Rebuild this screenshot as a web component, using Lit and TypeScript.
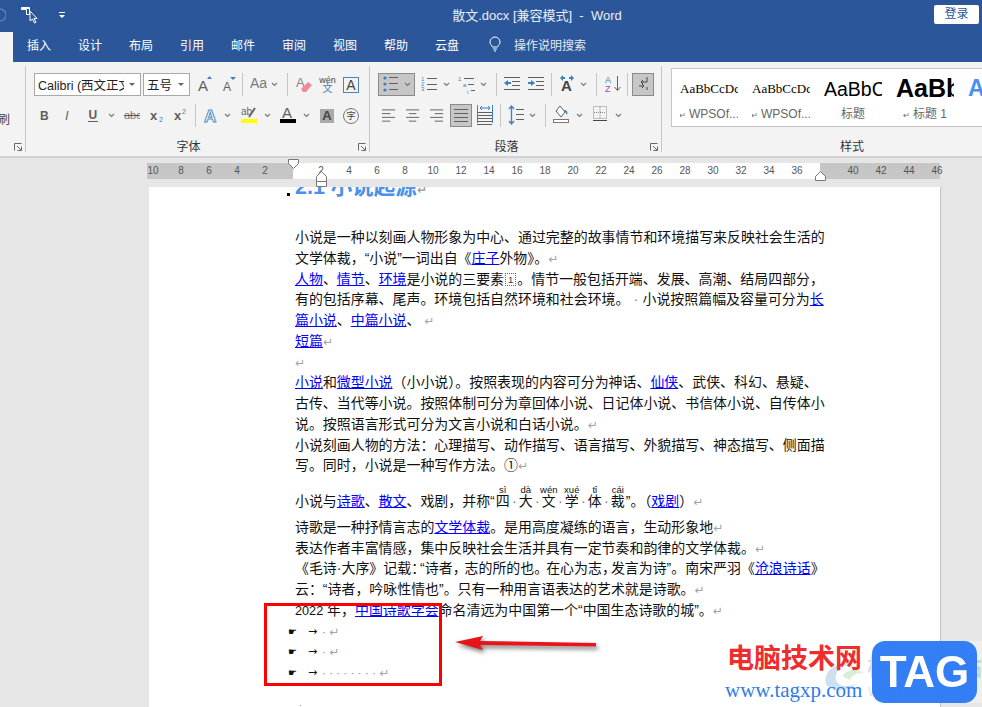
import { LitElement, html, svg, css } from "lit";
import { customElement } from "lit/decorators.js";

const G = "#5f5f5f";
const B = "#3f7fbf";
type Item = [number, number, unknown];

const ic = (w: number, body: unknown) =>
  html`<svg width=${w} height="23" viewBox="0 0 ${w} 23">${body}</svg>`;
const chev = ic(7, svg`<polyline points="1,10 3.5,12.5 6,10" fill="none" stroke="#777" stroke-width="1.1"/>`);
const sep = html`<span class="sep"></span>`;
const tx = (x: number, y: number, size: number, t: string, fill = G, extra = "") =>
  svg`<text x=${x} y=${y} font-size=${size} fill=${fill} font-weight=${extra === "b" ? 700 : 400} font-style=${extra === "i" ? "italic" : "normal"}>${t}</text>`;
const hl = (x1: number, x2: number, y: number, c = G) =>
  svg`<line x1=${x1} x2=${x2} y1=${y + 0.5} y2=${y + 0.5} stroke=${c}/>`;
const launcher = html`<svg class="launch" width="8" height="8" viewBox="0 0 8 8"><path d="M.5 7.5V.5H7.5M3 3l4 4M7.5 3.5V7.5H3.5" fill="none" stroke="#666"/></svg>`;

const lines = (xs: number, w: number, ys: number[]) => ys.map((y) => hl(xs, xs + w, y));

const font1: Item[] = [
  [34, 107, html`<div class="combo"><span class="ctext">Calibri (西文正文</span><span class="tri"></span></div>`],
  [143, 47, html`<div class="combo"><span class="ctext">五号</span><span class="tri"></span></div>`],
  [197, 16, ic(16, svg`${tx(1, 18, 15, "A")}<path d="M10 6l2.5-3 2.5 3z" fill=${B}/>`)],
  [222, 15, ic(15, svg`${tx(1, 18, 12, "A")}<path d="M8 4h6l-3 3z" fill=${B}/>`)],
  [242, 1, sep],
  [250, 17, ic(17, svg`${tx(0, 15, 14, "Aa", "#7a7a7a")}`)],
  [271, 7, chev],
  [287, 1, sep],
  [296, 16, ic(16, svg`${tx(0, 14, 13, "A", "#888")}<path d="M5 16l7-7 4 3-6 7H7z" fill="#ef8a98"/>`)],
  [319, 17, html`<span class="wen"><b>wén</b><i>文</i></span>`],
  [343, 16, html`<span class="abox">A</span>`],
];
const font2: Item[] = [
  [40, 9, ic(9, tx(0, 16, 12, "B", G, "b"))],
  [65, 8, ic(8, tx(0, 16, 13, "I", "#666", "i"))],
  [88, 10, ic(10, svg`${tx(0.5, 15, 12, "U", G, "b")}${hl(0, 10, 17)}`)],
  [108, 7, chev],
  [124, 16, ic(16, svg`${tx(0, 15, 11, "abc", "#777")}${hl(0, 16, 11, "#555")}`)],
  [150, 13, ic(13, svg`${tx(0, 16, 13, "x", G, "b")}${tx(9, 18, 7, "2", B)}`)],
  [174, 12, ic(12, svg`${tx(0, 16, 13, "x", G, "b")}${tx(8, 10, 7, "2", B)}`)],
  [195, 1, sep],
  [204, 15, ic(15, svg`<text x="0" y="18" font-size="17" font-weight="700" fill="#fff" stroke="#4f8ecb" stroke-width="1">A</text>`)],
  [224, 7, chev],
  [241, 16, ic(16, svg`${tx(0, 11, 10, "ab", "#666")}<path d="M8 13l6-9" stroke="#666" stroke-width="2"/><rect y="15" width="16" height="4" fill="#ffff00"/>`)],
  [264, 7, chev],
  [280, 16, ic(16, svg`${tx(2, 14, 15, "A")}<rect y="15" width="16" height="4" fill="#000"/>`)],
  [303, 7, chev],
  [320, 14, html`<span class="shaded">A</span>`],
  [343, 16, html`<span class="circ">字</span>`],
];
const listIcon = (kinds: string) => ic(18, svg`
  <g fill=${B}>${[6, 11, 16].map((y, i) => svg`<text x="0" y=${y + 2} font-size="6">${kinds[i]}</text>`)}</g>
  ${lines(6, 10, [5, 11, 16])}`);
const para1: Item[] = [
  [378, 37, html`<span class="active wide">${ic(16, svg`<g fill=${B}><circle cx="2" cy="5" r="1.6"/><circle cx="2" cy="11" r="1.6"/><circle cx="2" cy="17" r="1.6"/></g>${lines(6, 9, [4, 10, 16])}`)}${chev}</span>`],
  [420, 20, listIcon("123")],
  [443, 7, chev],
  [458, 18, ic(18, svg`<g fill=${B}><text x="0" y="8" font-size="6">1</text><text x="5" y="14" font-size="6">a</text><text x="9" y="21" font-size="6">i</text></g>${hl(6, 16, 5)}${hl(10, 16, 11)}${hl(13, 17, 17)}`)],
  [480, 7, chev],
  [496, 1, sep],
  [504, 16, ic(16, svg`${lines(8, 8, [8, 12])}${hl(0, 16, 4)}${hl(0, 16, 16)}<path d="M0 10l4-3v2h3v2H4v2z" fill=${B}/>`)],
  [528, 16, ic(16, svg`${lines(8, 8, [8, 12])}${hl(0, 16, 4)}${hl(0, 16, 16)}<path d="M7 10l-4-3v2H0v2h3v2z" fill=${B}/>`)],
  [551, 1, sep],
  [559, 16, ic(16, svg`${tx(2, 18, 15, "A", "#444", "b")}<path d="M1 5l3-3v2h2v2H4v2zM15 5l-3-3v2h-2v2h2v2z" fill=${B}/>`)],
  [580, 7, chev],
  [596, 1, sep],
  [605, 16, ic(16, svg`<text x="0" y="10" font-size="9" fill=${B}>A</text><text x="0" y="19" font-size="9" fill="#8e4fc0">Z</text><path d="M12.5 3v14M9.5 14l3 3.5 3-3.5" fill="none" stroke=${G}/>`)],
  [627, 1, sep],
  [632, 22, html`<span class="active">${ic(14, svg`<path d="M11 4v5H5M7 7L5 9l2 2" fill="none" stroke="#444"/><path d="M3 13h5M6 11l2 2-2 2" fill="none" stroke="#444"/><path d="M11 14v3" stroke="#444"/>`)}</span>`],
];
const al = (x: number[][]) => ic(16, svg`${x.map(([a, b], i) => hl(a, b, 5 + i * 4))}`);
const para2: Item[] = [
  [382, 15, al([[0, 14], [0, 9], [0, 14], [0, 9]])],
  [406, 15, al([[0, 14], [3, 11], [0, 14], [3, 11]])],
  [430, 15, al([[0, 14], [5, 14], [0, 14], [5, 14]])],
  [450, 22, html`<span class="active">${al([[1, 15], [1, 15], [1, 15], [1, 15]])}</span>`],
  [477, 16, ic(16, svg`${lines(0, 15, [8, 11, 14, 17, 20])}<path d="M.5 1v18M15.5 1v18" stroke=${B}/><path d="M3 4h10M3 4l2-2M3 4l2 2M13 4l-2-2M13 4l-2 2" stroke=${B} fill="none"/>`)],
  [500, 1, sep],
  [508, 16, ic(16, svg`${lines(8, 8, [5, 10, 15])}<path d="M3.5 2v18M1 5l2.5-3L6 5M1 17l2.5 3L6 17" fill="none" stroke=${B} stroke-width="1.3"/>`)],
  [529, 7, chev],
  [545, 1, sep],
  [553, 16, ic(16, svg`<path d="M3 7l4-5 5 6-4 5z" fill="#fff" stroke=${G}/><path d="M11 6c3 0 4 2 3 5-1-2-2-3-3-5z" fill=${B}/><rect x="0.5" y="15.5" width="15" height="3" fill="#fff" stroke="#777"/>`)],
  [576, 7, chev],
  [593, 14, ic(14, svg`<rect x="0.5" y="2.5" width="13" height="12" fill="none" stroke="#888" stroke-dasharray="1 1"/><path d="M7 3v12M1 8.5h12" stroke="#888" stroke-dasharray="1 1"/>${hl(0, 14, 16, "#444")}`)],
  [615, 7, chev],
];

const styleItems = [
  { s: "AaBbCcDd", c: "times", l: "WPSOf...", m: true },
  { s: "AaBbCcDd", c: "times", l: "WPSOf...", m: true },
  { s: "AaBbC", c: "h0", l: "标题", m: false },
  { s: "AaBb", c: "h1", l: "标题 1", m: true },
  { s: "A", c: "h2", l: "标", m: false },
];

const range = (from: number, to: number) => {
  const r: number[] = [];
  for (let i = from; i <= to; i += 2) r.push(i);
  return r;
};

const a = (t: string) => html`<a>${t}</a>`;
const pm = html`<span class="pm">↵</span>`;
const rb = (c: string, p: string) => html`<span class="rb"><span class="rt">${p}</span>${c}</span>`;
const dot = html`<span class="dot">·</span>`;

@customElement("app-root")
export class AppRoot extends LitElement {
  static styles = css`
    :host { display: block; position: relative; width: 982px; height: 707px; overflow: hidden; background: #e6e6e6;
      font-family: "Liberation Sans", "Noto Sans CJK SC", sans-serif; color: #000; }
    .title { height: 32px; background: #2b579a; display: grid; grid-template-columns: 1fr auto 1fr; align-items: center; color: #fff; }
    .qat { display: flex; align-items: center; padding: 0 0 2px 0; }
    .undo { margin-right: 15px; }
    .dd { margin-left: 20px; }
    .doc-name { font-size: 13px; color: #e9eef6; padding-bottom: 3px; padding-left: 92px; }
    .login { justify-self: end; margin: 0 3px 3px 0; width: 45px; height: 19px; border-radius: 2px; background: #fff; color: #2b579a; font-size: 12px; text-align: center; line-height: 19px; }
    .tabs { height: 30px; background: #2b579a; display: flex; align-items: center; color: #fff; font-size: 12px; padding-bottom: 6px; box-sizing: border-box; position: relative; }
    .home { width: 13px; height: 30px; background: #f3f3f3; margin-right: 14px; margin-bottom: -6px; flex: none; }
    .tab { width: 24px; margin-right: 27px; white-space: nowrap; }
    .bulb { margin: 0 14px 0 3px; }
    .search { color: #e4eaf3; margin-left: -1px; }
    .ribbon { background: #f3f3f3; border-bottom: 2px solid #d2d2d2; display: flex; padding-top: 4px; height: 90px; }
    .group { height: 86px; border-right: 1px solid #c6c6c6; box-sizing: border-box; display: flex; flex-direction: column; flex: none; position: relative; }
    .g0 { width: 26px; } .g1 { width: 344px; } .g2 { width: 292px; }
    .g3 { flex: 1; border: 0; min-width: 0; }
    .row { display: flex; height: 23px; align-items: center; font-size: 12px; flex: none; }
    .r1 { margin-top: 7px; } .r2 { margin-top: 8px; }
    .cell { flex: none; display: flex; align-items: center; justify-content: center; height: 23px; }
    .clip-text { font-size: 12px; color: #444; margin-top: 46px; margin-left: -2px; line-height: 16px; white-space: nowrap; }
    .foot { margin-top: auto; height: 20px; padding: 11px 18px 0 0; box-sizing: border-box; display: flex; justify-content: center; align-items: center; font-size: 12px; color: #333; line-height: 13px; }
    .g3 .foot { width: 380px; padding-right: 0; }
    .launch { position: absolute; right: 3px; bottom: 1px; }
    .sep { width: 1px; height: 23px; background: #c6c6c6; display: block; }
    .combo { width: 100%; height: 23px; box-sizing: border-box; border: 1px solid #a9a9a9; background: #fff; display: flex; align-items: center; font-size: 12.5px; color: #222; padding: 0 5px 0 3px; }
    .ctext { flex: 1; overflow: hidden; white-space: nowrap; min-width: 0; margin-right: 5px; }
    .tri { width: 0; height: 0; border: 3px solid transparent; border-top: 3px solid #666; border-bottom: 0; flex: none; }
    .wen { display: flex; flex-direction: column; align-items: center; line-height: 8px; font-size: 9px; color: #444; }
    .wen b { font-weight: 400; }
    .wen i { font-style: normal; color: #3f7fbf; font-size: 10px; line-height: 10px; }
    .abox { width: 16px; height: 16px; box-sizing: border-box; border: 1px solid #4f81bd; color: #444; font-size: 14px; line-height: 14px; text-align: center; }
    .shaded { width: 14px; height: 14px; background: #aaa; color: #444; font-size: 13px; font-weight: 700; line-height: 14px; text-align: center; }
    .circ { width: 16px; height: 16px; box-sizing: border-box; border: 1px solid #777; border-radius: 50%; font-size: 9px; line-height: 14px; text-align: center; color: #444; }
    .active { width: 100%; height: 23px; box-sizing: border-box; background: #c6c6c6; border: 1px solid #8a8a8a; display: flex; align-items: center; justify-content: center; }
    .wide { gap: 5px; }
    .gallery { margin: 2px 0 0 9px; height: 59px; width: 330px; box-sizing: border-box; background: #fff; border: 1px solid #c6c6c6; display: flex; padding-left: 8px; overflow: hidden; flex: none; }
    .sty { width: 58px; margin-right: 14px; flex: none; display: flex; flex-direction: column; align-items: center; overflow: hidden; }
    .sty-s { height: 38px; white-space: nowrap; display: flex; align-items: center; width: 58px; overflow: hidden; }
    .times { font-family: "Liberation Serif", serif; font-size: 13px; padding-top: 2px; box-sizing: border-box; }
    .h0 { font-size: 19.500px; padding-top: 2px; box-sizing: border-box; }
    .h1 { font-size: 25px; font-weight: 700; }
    .h2 { font-size: 23px; font-weight: 700; color: #4a90f0; }
    .sty-l { font-size: 12px; color: #666; white-space: nowrap; line-height: 16px; margin-top: -1px; }
    .sty-l span { font-size: 8px; margin-right: 3px; }
    .ruler-zone { height: 29px; padding-left: 147px; padding-top: 5px; box-sizing: border-box; display: flex; overflow: hidden; }
    .rz { height: 16px; display: flex; font-size: 10px; color: #555; line-height: 16px; text-align: center; flex: none; }
    .rl { width: 146px; background: #c6c6c6; justify-content: flex-end; padding-right: 14px; box-sizing: border-box; }
    .rm { width: 527px; background: #fff; padding-left: 14px; box-sizing: border-box; }
    .rr { width: 120px; background: #c6c6c6; padding-left: 19px; box-sizing: border-box; }
    .rz span { width: 28px; flex: none; }
    .workspace { height: 520px; padding-left: 149px; overflow: hidden; }
    .page { width: 792px; height: 520px; background: #fff; border-right: 1px solid #c4c4c4; padding: 0 0 0 146px; box-sizing: border-box; overflow: hidden; font-size: 13.950px; position: relative; color: #111; }
    .heading { height: 13px; display: flex; align-items: flex-end; white-space: nowrap; font-size: 21.500px; line-height: 20px; color: #4a90ee; font-weight: 700; position: relative; }
    .heading .in { margin-top: -14px; display: block; height: 26px; line-height: 26px; }
    .sq { width: 3px; height: 3px; background: #000; position: absolute; left: -8px; top: 6px; }
    .body { margin-top: 27px; }
    .l { height: 20.750px; line-height: 20.750px; white-space: nowrap; }
    .gap { margin-top: 15px; }
    .gap2 { margin-top: 5px; }
    .l a { color: #0000ff; text-decoration: underline; }
    .pm { color: #a3a3a3; font-size: 12px; font-family: "DejaVu Sans", sans-serif; }
    .fn { font-size: 9.500px; border: 1px dotted #666; padding: 0 2px; margin: 0 1px; color: #333; vertical-align: 1px; }
    .rb { display: inline-block; width: 16px; text-align: center; position: relative; }
    .rt { position: absolute; left: -8px; width: 32px; text-align: center; top: -7px; font-size: 9.500px; line-height: 12px; }
    .dot { color: #777; display: inline-block; width: 7px; text-align: center; }
    .dotw { color: #888; display: inline-block; width: 13px; text-align: center; }
    .num { font-size: 12.700px; }
    .n5 { margin-right: -5px; } .n2 { margin-right: -2px; }
    .bl { height: 20.750px; line-height: 20.750px; display: flex; margin-left: -7px; align-items: center; color: #111; position: relative; top: 1px; }
    .bl .h { width: 20px; font-family: "DejaVu Sans", sans-serif; font-size: 10px; flex: none; }
    .bl .ar { width: 14px; font-size: 11px; flex: none; font-family: "DejaVu Sans", sans-serif; }
    .bl .dots { color: #888; letter-spacing: 3.5px; font-size: 11px; }
    .redbox { position: absolute; left: 264px; top: 603px; width: 178px; height: 83px; box-sizing: border-box; border: 3px solid #ff0000; }
    .arrow { position: absolute; left: 450px; top: 630px; filter: drop-shadow(2px 3px 2px rgba(0,0,0,.5)); }
    .patch { position: absolute; left: 941px; top: 641px; width: 41px; height: 62px; background: #efefef; }
    .wm1 { position: absolute; left: 727px; top: 641px; font-size: 27px; line-height: 36px; font-weight: 700; color: #f02c2c; white-space: nowrap; }
    .wm2 { position: absolute; left: 725px; top: 678px; font-size: 21px; line-height: 24px; font-family: "Liberation Serif", serif; color: #2f7de8; white-space: nowrap; }
    .wm3 { position: absolute; left: 867px; top: 652px; font-size: 23px; line-height: 30px; color: rgba(90,140,190,.28); font-weight: 700; white-space: nowrap; }
    .wm4 { position: absolute; left: 868px; top: 681px; font-size: 16px; line-height: 20px; color: rgba(120,190,140,.3); white-space: nowrap; }
    .swirl { position: absolute; left: 822px; top: 660px; opacity: .55; }
    .tag { position: absolute; left: 872px; top: 641px; width: 105px; height: 62px; border-radius: 13px; background: #2e7bf6; color: #fff; font-size: 44px; font-weight: 700; line-height: 62px; text-align: center; opacity: .97; }
    .mk { position: absolute; }
    .m1 { left: 288px; top: 159px; } .m2 { left: 316px; top: 170px; } .m3 { left: 815px; top: 171px; }
    .bottom-dot { position: absolute; left: 300px; top: 705px; width: 1px; height: 1px; background: #999; }
  `;

  row(items: Item[], start: number, cls: string) {
    let prev = start;
    return html`<div class="row ${cls}">${items.map(([x, w, t]) => {
      const m = x - prev;
      prev = x + w;
      return html`<div class="cell" style="margin-left:${m}px;width:${w}px">${t}</div>`;
    })}</div>`;
  }

  render() {
    return html`
      <div class="title">
        <div class="qat">
          <svg class="undo" width="6" height="14" viewBox="0 0 6 14"><path d="M0 1a6 6 0 0 1 0 12" fill="none" stroke="#5f7fb3" stroke-width="1.500"/></svg>
          <svg width="17" height="18" viewBox="0 0 17 18"><path d="M.5 1.5h8v7h-3v-5h-5z" fill="none" stroke="#fff"/><path d="M1 2h7v1H1z" fill="#fff"/><path d="M9 5v10l2.5-2 2 4 1.500-.8-2-3.700h3z" fill="#2b579a" stroke="#fff"/></svg>
          <svg class="dd" width="8" height="8" viewBox="0 0 8 8"><path d="M1 1h6v1H1zM1 4h6L4 7z" fill="#fff"/></svg>
        </div>
        <div class="doc-name">散文.docx [兼容模式] &nbsp;- &nbsp;Word</div>
        <div class="login">登录</div>
      </div>
      <div class="tabs">
        <div class="home"></div>
        ${["插入", "设计", "布局", "引用", "邮件", "审阅", "视图", "帮助", "云盘"].map((t) => html`<div class="tab">${t}</div>`)}
        <svg class="bulb" width="12" height="16" viewBox="0 0 12 16"><path d="M3.500 11C2.500 9 1 8.500 1 6a5 5 0 0 1 10 0c0 2.500-1.500 3-2.500 5zM4 13h4M5 15h2" fill="none" stroke="#fff"/></svg>
        <div class="search">操作说明搜索</div>
      </div>
      <div class="ribbon">
        <div class="group g0"><div class="clip-text">刷</div>${launcher}</div>
        <div class="group g1">
          ${this.row(font1, 26, "r1")}
          ${this.row(font2, 26, "r2")}
          <div class="foot">字体</div>${launcher}
        </div>
        <div class="group g2">
          ${this.row(para1, 370, "r1")}
          ${this.row(para2, 370, "r2")}
          <div class="foot">段落</div>${launcher}
        </div>
        <div class="group g3">
          <div class="gallery">
            ${styleItems.map((s) => html`<div class="sty"><div class="sty-s ${s.c}">${s.s}</div><div class="sty-l">${s.m ? html`<span>↵</span>` : ""}${s.l}</div></div>`)}
          </div>
          <div class="foot">样式</div>
        </div>
      </div>
      <div class="ruler-zone">
        <div class="rz rl">${[10, 8, 6, 4, 2].map((n) => html`<span>${n}</span>`)}</div>
        <div class="rz rm">${range(2, 36).map((n) => html`<span>${n}</span>`)}</div>
        <div class="rz rr">${range(40, 46).map((n) => html`<span>${n}</span>`)}</div>
      </div>
      <div class="workspace">
        <div class="page">
          <div class="heading"><span class="sq"></span><span class="in">2.1 小说起源</span><span class="pm">↵</span></div>
          <div class="body">
            <div class="l">小说是一种以刻画人物形象为中心、通过完整的故事情节和环境描写来反映社会生活的</div>
            <div class="l">文学体裁，“小说”一词出自《${a("庄子")}外物》。${pm}</div>
            <div class="l">${a("人物")}、${a("情节")}、${a("环境")}是小说的三要素<span class="fn">1</span>。情节一般包括开端、发展、高潮、结局四部分，</div>
            <div class="l">有的包括序幕、尾声。环境包括自然环境和社会环境。<span class="dotw">·</span>小说按照篇幅及容量可分为${a("长")}</div>
            <div class="l">${a("篇小说")}、${a("中篇小说")}、&nbsp;${pm}</div>
            <div class="l">${a("短篇")}${pm}</div>
            <div class="l">${pm}</div>
            <div class="l">${a("小说")}和${a("微型小说")}（小小说）。按照表现的内容可分为神话、${a("仙侠")}、武侠、科幻、悬疑、</div>
            <div class="l">古传、当代等小说。按照体制可分为章回体小说、日记体小说、书信体小说、自传体小</div>
            <div class="l">说。按照语言形式可分为文言小说和白话小说。${pm}</div>
            <div class="l">小说刻画人物的方法：心理描写、动作描写、语言描写、外貌描写、神态描写、侧面描</div>
            <div class="l">写。同时，小说是一种写作方法。①${pm}</div>
            <div class="l gap">小说与${a("诗歌")}、${a("散文")}、戏剧，并称“${rb("四", "sì")}${dot}${rb("大", "dà")}${dot}${rb("文", "wén")}${dot}${rb("学", "xué")}${dot}${rb("体", "tǐ")}${dot}${rb("裁", "cái")}”。（${a("戏剧")}）${pm}</div>
            <div class="l gap2">诗歌是一种抒情言志的${a("文学体裁")}。是用高度凝练的语言，生动形象地${pm}</div>
            <div class="l">表达作者丰富情感，集中反映社会生活并具有一定节奏和韵律的文学体裁。${pm}</div>
            <div class="l">《毛诗·大序》记载<span class="n5">：</span>“诗者<span class="n2">，</span>志的所的也<span class="n2">。</span>在心为志<span class="n5">，</span>发言为诗”。南宋严羽《${a("沧浪诗话")}》</div>
            <div class="l">云：“诗者，吟咏性情也”。只有一种用言语表达的艺术就是诗歌。${pm}</div>
            <div class="l"><span class="num">2022</span> 年，${a("中国诗歌学会")}命名清远为中国第一个“中国生态诗歌的城”。${pm}</div>
            <div class="bl"><span class="h">☛</span><span class="ar">→</span><span class="dots">·</span>${pm}</div>
            <div class="bl"><span class="h">☛</span><span class="ar">→</span><span class="dots">·</span>${pm}</div>
            <div class="bl"><span class="h">☛</span><span class="ar">→</span><span class="dots">········</span>${pm}</div>
          </div>
        </div>
      </div>
      <svg class="mk m1" width="11" height="10" viewBox="0 0 11 10"><path d="M.5.500h10v4l-5 5-5-5z" fill="#fff" stroke="#777"/></svg>
      <svg class="mk m2" width="11" height="17" viewBox="0 0 11 17"><path d="M.5 11.500v-5l5-5 5 5v5zM.5 11.500h10v5H.5z" fill="#fff" stroke="#777"/></svg>
      <svg class="mk m3" width="11" height="10" viewBox="0 0 11 10"><path d="M.5 9.500v-4l5-5 5 5v4z" fill="#fff" stroke="#777"/></svg>
      <div class="redbox"></div>
      <svg class="arrow" width="150" height="24" viewBox="0 0 150 24"><path d="M5 12L33 6l-3 5 116 2v3.500L30 15l3 5z" fill="#e8141c"/></svg>
      <div class="patch"></div>
      <div class="wm3">极光下载站</div>
      <div class="wm4">www.xz7.com</div>
      <svg class="swirl" width="44" height="32" viewBox="0 0 44 32"><path d="M4 24C0 10 18 0 34 2 20 4 12 12 14 20c2 6 10 8 20 4-8 8-26 8-30 0z" fill="#a9c7e2"/><path d="M20 16c6-8 16-8 22-2-6-2-12 0-14 6z" fill="#b5e0b5"/></svg>
      <div class="wm1">电脑技术网</div>
      <div class="wm2">www.tagxp.com</div>
      <div class="tag">TAG</div>
      <div class="bottom-dot"></div>
    `;
  }
}
